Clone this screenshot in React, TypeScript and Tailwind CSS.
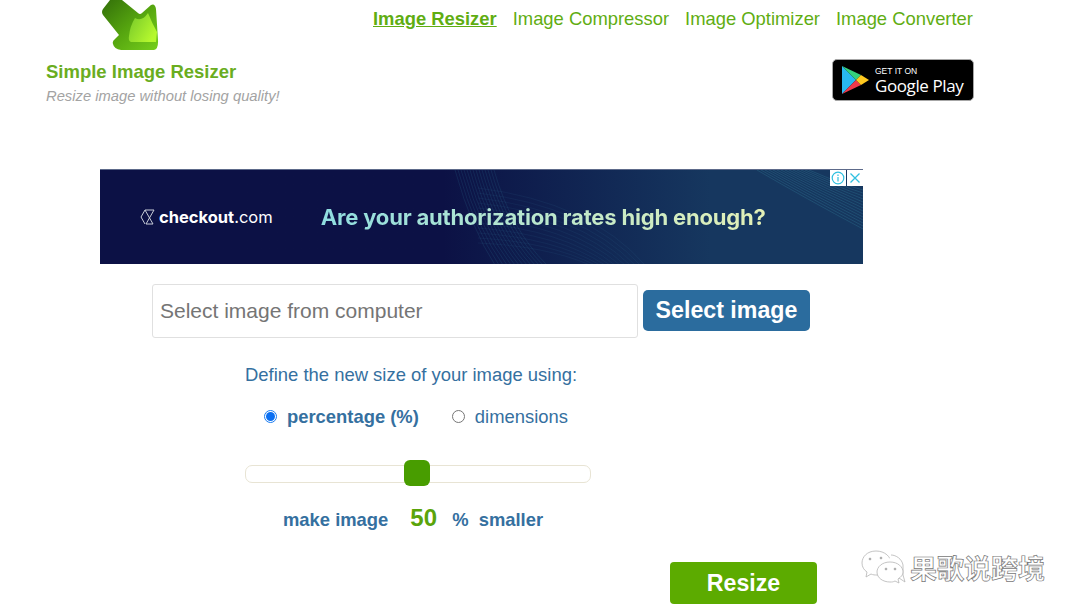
import React from "react";

const sans = "font-['Liberation_Sans',Arial,sans-serif]";

function Logo() {
  return (
    <svg width="58" height="52" viewBox="0 0 58 52" className="ml-[56px] block">
      <defs>
        <linearGradient id="arrowBody" x1="0" y1="0" x2="1" y2="1">
          <stop offset="0" stopColor="#336f0a" />
          <stop offset="0.5" stopColor="#55a40f" />
          <stop offset="1" stopColor="#76d01c" />
        </linearGradient>
        <linearGradient id="arrowGlow" x1="0" y1="0" x2="1" y2="0.6">
          <stop offset="0" stopColor="#74c62a" />
          <stop offset="1" stopColor="#b6f92e" />
        </linearGradient>
      </defs>
      <path d="M1 15 Q-1 12 1 9 L8 0 L20 0 L36 13 Q38 15 40 13 L49 5 Q53 3 54 9 L56 40 Q56.500 49 52 50 L19 50 Q12 49 11 44 Q10 41 13 39 L17 35 Z" fill="url(#arrowBody)" />
      <path d="M33 18 Q40 22 46 13 Q50 23 55 32 L54 42 L29 42 Q26 41 27 36 Q28 26 33 18 Z" fill="url(#arrowGlow)" />
    </svg>
  );
}

function GooglePlay() {
  return (
    <div className="flex h-[42px] w-[142px] items-center rounded-[5px] border border-[#a6a6a6] bg-black pl-[9px]">
      <svg width="27" height="30" viewBox="0 0 27 30">
        <path d="M0 1 L14 15 L0 29 Z" fill="#28b8f0" />
        <path d="M0 1 L19 10 L14 15 Z" fill="#34d27b" />
        <path d="M0 29 L19 20 L14 15 Z" fill="#f0384a" />
        <path d="M19 10 L27 15 L19 20 L14 15 Z" fill="#ffc91f" />
      </svg>
      <div className="ml-[6px] flex flex-col whitespace-nowrap text-white">
        <span className="text-[8.5px] leading-[10px]">GET IT ON</span>
        <span className="text-[17px] leading-[19px] tracking-[-0.4px] font-['Open_Sans',sans-serif]">Google Play</span>
      </div>
    </div>
  );
}

// thin wave lines of the banner background
const meshLeft = Array.from({ length: 14 }, (_, i) => `M${355 + i * 3} 0 Q${372 + i * 3} 60 ${395 + i * 4} 95`);
const meshMid = Array.from({ length: 12 }, (_, i) => `M378 ${18 + i * 5} Q${490 - i * 4} ${32 + i * 4} ${545 - i * 5} 95`);
const meshRight = Array.from({ length: 14 }, (_, i) => `M${657 + i * 4} 0 Q${705 + i * 3} ${28 - i} 763 ${59 - i * 3}`);

function AdBanner() {
  return (
    <div className="relative mx-[100px] flex h-[95px] w-[763px] items-center overflow-hidden border-t border-[#5d6a8a] bg-gradient-to-r from-[#0c1145] from-45% to-[#16375f] to-80%">
      <svg className="absolute inset-0" width="763" height="95" viewBox="0 0 763 95" fill="none" stroke="#3d93ad" strokeWidth="0.5">
        {meshLeft.map((d) => <path key={d} d={d} opacity="0.3" />)}
        {meshMid.map((d) => <path key={d} d={d} opacity="0.18" />)}
        {meshRight.map((d) => <path key={d} d={d} opacity="0.5" />)}
      </svg>
      <svg className="relative ml-[40px]" width="15" height="16" viewBox="0 0 15 16" fill="none" stroke="#c9ced9" strokeWidth="1">
        <path d="M5 1 H14 L6 15 H13 L5 1 L1 8 L5 15" />
      </svg>
      <span className="relative ml-[4px] text-[16.5px] leading-none text-white font-['Inter',sans-serif]">
        <span className="font-bold">checkout</span>.com
      </span>
      <span className="relative ml-[48px] text-[22.050px] leading-[28px] font-bold tracking-[-0.2px] font-['Inter',sans-serif] bg-gradient-to-r from-[#8fdde0] to-[#e3f0b6] bg-clip-text text-transparent">
        Are your authorization rates high enough?
      </span>
      <div className="absolute right-0 top-0 flex h-4 gap-px">
        <div className="flex w-4 items-center justify-center bg-white">
          <svg width="14" height="14" viewBox="0 0 14 14" fill="none" stroke="#2fc0e0" strokeWidth="1.2">
            <circle cx="7" cy="7" r="5.8" />
            <path d="M7 6 V10.5 M7 3.4 V5" />
          </svg>
        </div>
        <div className="flex w-4 items-center justify-center bg-white">
          <svg width="12" height="12" viewBox="0 0 12 12" fill="none" stroke="#2fc0e0" strokeWidth="1.3">
            <path d="M1.5 1.5 L10.5 10.5 M10.5 1.5 L1.5 10.5" />
          </svg>
        </div>
      </div>
    </div>
  );
}

function Watermark() {
  return (
    <div className="absolute left-[860px] top-[549px] flex items-center">
      <svg width="52" height="36" viewBox="0 0 52 36" fill="#ffffff" stroke="#b5b5b5" strokeWidth="0.8">
        <path d="M16 2 C7 2 2 8 2 14 C2 18 4 21 7 23 L6 28 L11 25 C13 26 15 26 17 26 C26 26 31 20 31 14 C31 8 25 2 16 2 Z" />
        <path d="M31 6 C36 6 42 10 43 16 L43 26 L45 33 L39 29 C34 31 26 30 22 26" />
        <path d="M30 13 C22 13 17 18 17 23 C17 29 23 33 30 33 C32 33 33 33 35 32 L39 34 L38 30 C41 28 43 26 43 23 C43 18 38 13 30 13 Z" />
        <circle cx="10" cy="10" r="1" fill="#888" />
        <circle cx="21" cy="9" r="1" fill="#888" />
        <circle cx="26" cy="20" r="1" fill="#888" />
        <circle cx="35" cy="20" r="1" fill="#888" />
      </svg>
      <span className="ml-[-2px] text-[27px] leading-none font-bold text-white [-webkit-text-stroke:0.7px_#777] font-['Noto_Sans_CJK_SC',sans-serif]">
        果歌说跨境
      </span>
    </div>
  );
}

export default function App() {
  return (
    <div className={`relative h-[616px] w-[1080px] overflow-hidden bg-white ${sans}`}>
      <header className="flex h-[169px]">
        <div className="ml-[46px] w-[327px]">
          <Logo />
          <div className="mt-[9px] text-[18.500px] leading-[22px] font-bold text-[#6aad1f]">Simple Image Resizer</div>
          <div className="mt-[3px] text-[14.750px] leading-[20px] italic text-[#a3a3a3]">Resize image without losing quality!</div>
        </div>
        <div className="flex w-[601px] flex-col items-end">
          <nav className="flex w-full gap-[16px] whitespace-nowrap pt-[8px] text-[18.400px] leading-[21px] text-[#5fad12]">
            <a className="font-bold underline">Image Resizer</a>
            <a>Image Compressor</a>
            <a>Image Optimizer</a>
            <a>Image Converter</a>
          </nav>
          <div className="mt-[30px]">
            <GooglePlay />
          </div>
        </div>
      </header>

      <AdBanner />

      <div className="mt-[20px] ml-[152px] flex items-center gap-[5px]">
        <div className="flex h-[54px] w-[486px] items-center rounded-[3px] border border-[#e0e0e0] pl-[7px] text-[21px] text-[#757575]">
          Select image from computer
        </div>
        <button className="mb-[1px] h-[41px] w-[167px] rounded-[5px] bg-[#2b6c9e] text-[23.200px] font-bold text-white">Select image</button>
      </div>

      <div className="ml-[245px] mt-[26px] text-[18.450px] leading-[21px] text-[#35709f]">Define the new size of your image using:</div>

      <div className="ml-[264px] mt-[21px] flex items-center text-[18.400px] leading-[21px] text-[#35709f]">
        <span className="flex h-[13px] w-[13px] items-center justify-center rounded-full border border-[#1a7cf0]">
          <span className="h-[9px] w-[9px] rounded-full bg-[#0a6ff2]" />
        </span>
        <span className="ml-[10px] font-bold">percentage (%)</span>
        <span className="ml-[33px] h-[13px] w-[13px] rounded-full border border-[#767676]" />
        <span className="ml-[10px]">dimensions</span>
      </div>

      <div className="relative ml-[245px] mt-[38px] h-[18px] w-[346px] rounded-[7px] border border-[#e8e4d4]">
        <div className="absolute left-[158px] top-[-6px] h-[26px] w-[26px] rounded-[6px] bg-[#489d00]" />
      </div>

      <div className="ml-[283px] mt-[20px] flex items-baseline text-[18.400px] leading-[30px] font-bold text-[#35709f]">
        <span>make image</span>
        <span className="ml-[22px] w-[42px] text-[24px] text-[#5aa40a]">50</span>
        <span>%</span>
        <span className="ml-[10px]">smaller</span>
      </div>

      <div className="ml-[670px] mt-[27px]">
        <button className="h-[42px] w-[147px] rounded-[4px] bg-[#5cab00] text-[23.200px] font-bold text-white">Resize</button>
      </div>

      <Watermark />
    </div>
  );
}
